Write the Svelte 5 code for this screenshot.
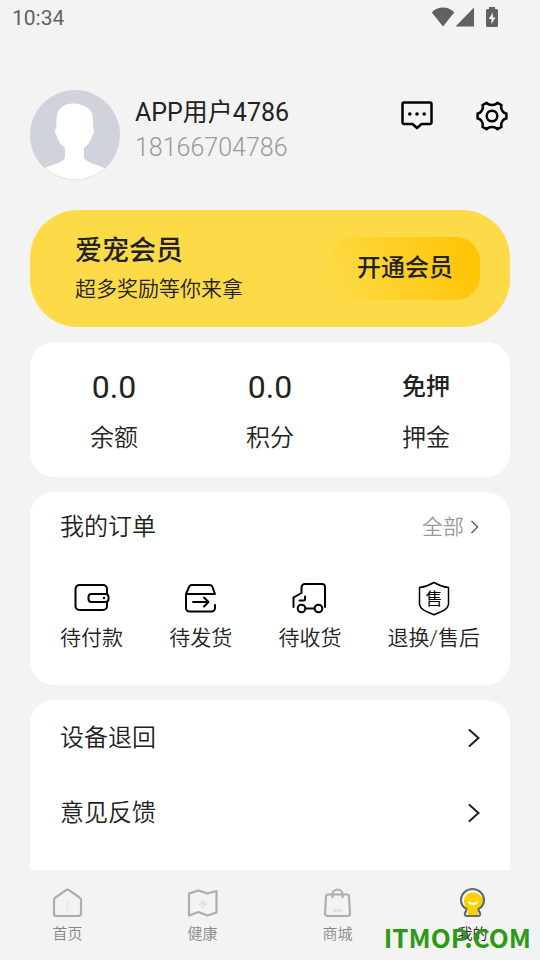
<script lang="ts">
  type Stat = { label: string; value: string; text?: boolean };

  const user = { name: 'APP用户4786', phone: '18166704786' };

  const stats: Stat[] = [
    { label: '余额', value: '0.0' },
    { label: '积分', value: '0.0' },
    { label: '押金', value: '免押', text: true },
  ];

  const orders = [
    { id: 'pay', label: '待付款' },
    { id: 'ship', label: '待发货' },
    { id: 'receive', label: '待收货' },
    { id: 'service', label: '退换/售后' },
  ];

  const menu = ['设备退回', '意见反馈'];

  const tabs = [
    { id: 'home', label: '首页' },
    { id: 'health', label: '健康' },
    { id: 'mall', label: '商城' },
    { id: 'mine', label: '我的' },
  ];

  let active = $state('mine');
</script>

<div class="app">
  <div class="status">
    <span>10:34</span>
    <div class="status-icons">
      <svg width="24" height="20" viewBox="0 0 24 20" fill="currentColor">
        <path d="M12 19.500L.8 5.500C3.800 2 7.500 .5 12 .5s8.200 1.500 11.200 5z" />
      </svg>
      <svg width="20" height="20" viewBox="0 0 20 20" fill="currentColor">
        <path d="M19 .5v19H.5z" />
      </svg>
      <svg class="battery" width="14" height="20" viewBox="0 0 14 20">
        <path d="M4 0h6v2h1.500a1.500 1.500 0 0 1 1.500 1.500v15a1.500 1.500 0 0 1-1.500 1.500h-9A1.500 1.500 0 0 1 1 18.500v-15A1.500 1.500 0 0 1 2.500 2H4z" fill="currentColor" />
        <path d="M7.800 5.500L3.800 12h2.700v5l4-6.500H7.800z" fill="#f3f3f3" />
      </svg>
    </div>
  </div>

  <main>
    <header class="profile">
      <svg class="avatar" width="90" height="90" viewBox="0 0 90 90">
        <defs>
          <clipPath id="avatar-clip"><circle cx="45" cy="45" r="44.500" /></clipPath>
        </defs>
        <circle cx="45" cy="45" r="45" fill="#d0d3db" />
        <path
          clip-path="url(#avatar-clip)"
          fill="#fff"
          d="M26.500 38V30C26.500 19 33 13.500 43 13.500c3-.3 6 0 8 1.500 8 2 12 7 12 15v8c1.500 1 1.500 5-.5 7-1.500 6-5 10-8.500 13v9.500c2 5 12 6.500 20 10.500L75 90H15V78c9-4 18-5.500 20-10.500V58c-4-3-7-7-8.500-13-2-2-2-6 0-7z"
        />
      </svg>
      <div class="who">
        <h1>{user.name}</h1>
        <p>{user.phone}</p>
      </div>
      <div class="actions">
        <button aria-label="消息">
          <svg width="34" height="34" viewBox="0 0 34 34" fill="none" stroke="currentColor" stroke-width="2.500" stroke-linejoin="round">
            <path d="M4 3.500h26A1.500 1.500 0 0 1 31.500 5v18.500A1.500 1.500 0 0 1 30 25h-8.500L17 29l-4.500-4H4a1.500 1.500 0 0 1-1.500-1.500V5A1.500 1.500 0 0 1 4 3.500z" />
            <g fill="currentColor" stroke="none">
              <circle cx="9.800" cy="15" r="1.800" />
              <circle cx="17" cy="15" r="1.800" />
              <circle cx="24.200" cy="15" r="1.800" />
            </g>
          </svg>
        </button>
        <button aria-label="设置">
          <svg width="34" height="34" viewBox="0 0 34 34" fill="none" stroke="currentColor" stroke-width="2.500" stroke-linejoin="round">
            <path d="M11.500 3.800C13.500 6.600 20.500 6.600 22.500 3.800L26.500 6.100C25.100 9.300 27.800 14.200 31.400 14.500V19.500C27.800 19.800 25.100 24.700 26.500 27.900L22.500 30.200C20.500 27.400 13.500 27.400 11.500 30.200L7.500 27.900C8.900 24.700 6.200 19.800 2.600 19.500V14.500C6.200 14.200 8.900 9.300 7.500 6.100Z" />
            <circle cx="17" cy="17" r="5.300" />
          </svg>
        </button>
      </div>
    </header>

    <section class="vip">
      <div>
        <h2>爱宠会员</h2>
        <p>超多奖励等你来拿</p>
      </div>
      <button>开通会员</button>
    </section>

    <section class="card stats">
      {#each stats as stat}
        <div class="stat">
          <strong class:text={stat.text}>{stat.value}</strong>
          <span>{stat.label}</span>
        </div>
      {/each}
    </section>

    <section class="card orders">
      <div class="orders-head">
        <h2>我的订单</h2>
        <a href="#orders">
          全部
          <svg width="10" height="14" viewBox="0 0 10 14" fill="none" stroke="#666" stroke-width="1.500">
            <path d="M1.500 1l6 6-6 6" />
          </svg>
        </a>
      </div>
      <div class="order-list">
        {#each orders as order}
          <button>
            <svg width="36" height="36" viewBox="0 0 36 36" fill="none" stroke="currentColor" stroke-width="2" stroke-linecap="round" stroke-linejoin="round">
              {#if order.id === 'pay'}
                <path d="M33 14V9a4 4 0 0 0-4-4H5.500a4 4 0 0 0-4 4v17a4 4 0 0 0 4 4H29a4 4 0 0 0 4-4V22" />
                <rect x="14.500" y="14" width="20" height="8" rx="3" />
                <circle cx="30" cy="18" r="1.200" fill="currentColor" stroke="none" />
              {:else if order.id === 'ship'}
                <path d="M32 25v3a3.500 3.500 0 0 1-3.500 3.500h-22A3.500 3.500 0 0 1 3 28V14h29L29.500 7a3 3 0 0 0-2.500-2H8.500A3 3 0 0 0 6 7L3 14" />
                <path d="M10 22h15M21 17.500l4.500 4.500-4.500 4.500" />
              {:else if order.id === 'receive'}
                <path d="M1.500 27V17.500L9.500 13V7.500A3.500 3.500 0 0 1 13 4h17A3 3 0 0 1 33 7v20M13.500 28.500h8.500M7.500 20.500H12a1 1 0 0 0 1-1V16.500" />
                <circle cx="9.500" cy="28.500" r="3.800" />
                <circle cx="26.500" cy="28.500" r="3.800" />
              {:else}
                <path stroke-width="1.500" d="M18 2.500c4.500 2.800 9 4.300 14.500 5v17C31.500 30 25 31.500 18 34.800 11 31.500 4.500 30 3.500 24.500v-17C9 6.800 13.500 5.300 18 2.500z" />
                <text x="18" y="25" text-anchor="middle">售</text>
              {/if}
            </svg>
            <span>{order.label}</span>
          </button>
        {/each}
      </div>
    </section>

    <nav class="card menu" aria-label="更多服务">
      {#each menu as item}
        <a href="#menu">
          {item}
          <svg width="14" height="20" viewBox="0 0 14 20" fill="none" stroke="#222" stroke-width="2" stroke-linecap="round">
            <path d="M2.500 2l9 8-9 8" />
          </svg>
        </a>
      {/each}
    </nav>
  </main>

  <nav class="tabs" aria-label="主导航">
    {#each tabs as tab}
      <button class:active={active === tab.id} onclick={() => (active = tab.id)}>
        <svg width="32" height="32" viewBox="0 0 32 32" fill="none" stroke="#aaaead" stroke-width="2.200" stroke-linejoin="round">
          {#if tab.id === 'home'}
            <path d="M3.500 10.500L14 3.200a2.500 2.500 0 0 1 3 0l10.500 7.300A3 3 0 0 1 29 13v13.500a2.500 2.500 0 0 1-2.500 2.500h-22A2.500 2.500 0 0 1 2 26.500V13a3 3 0 0 1 1.500-2.500z" />
            <path d="M15.500 15.500v7" stroke="#e5ecea" stroke-width="3" stroke-linecap="round" />
          {:else if tab.id === 'health'}
            <path d="M2 6.500L11.500 3.500l9 3L29.500 4v21.500L20.500 28.500l-9-3.500-9.500 3.500z" />
            <path d="M16 14v6M13 17h6" stroke="#dfe4e2" stroke-width="2.500" stroke-linecap="round" />
          {:else if tab.id === 'mall'}
            <path d="M6 7.500h19a2 2 0 0 1 2 2l1 17a2.500 2.500 0 0 1-2.500 2.500h-20A2.500 2.500 0 0 1 3 26.500l1-17a2 2 0 0 1 2-2zM10.500 11V7.500a5 5 0 0 1 10 0V11" />
            <path d="M11 23.500h9" stroke="#dfe3e1" stroke-width="2.500" />
          {:else}
            <path d="M9.500 22C6 20 4 17 4 13a11.500 11 0 0 1 23 0c0 4-2 7-5.500 9 0 2 .7 2.500 1.500 4 .6 1.500-.2 3-2 3H10c-1.800 0-2.600-1.500-2-3 .8-1.500 1.500-2 1.500-4z" fill="#fff" stroke="none" />
            <path d="M11 28v-5.500c-2.500-2-4-4.500-4-8.500 0-5.500 4.500-8.500 9-8.500S26 9 26 14c0 4-2 6.500-5 8.500V28z" fill="#fdd000" stroke="none" />
            <path d="M9.500 22C6 20 4 17 4 13a11.500 11 0 0 1 23 0c0 4-2 7-5.500 9 0 2 .7 2.500 1.500 4 .6 1.500-.2 3-2 3H10c-1.800 0-2.600-1.500-2-3 .8-1.500 1.500-2 1.500-4z" stroke="#666b69" />
            <path d="M12 15.500c2 1.800 6 1.800 8 0" stroke="#fff" stroke-width="2.200" stroke-linecap="round" />
          {/if}
        </svg>
        <span>{tab.label}</span>
      </button>
    {/each}
    <span class="site-mark">ITMOP.COM</span>
  </nav>
</div>

<style>
  :global(body) {
    margin: 0;
    background: #f3f3f3;
  }
  .app {
    display: flex;
    flex-direction: column;
    height: 100vh;
    font-family: Roboto, 'Noto Sans CJK SC', sans-serif;
    font-weight: 350;
    color: #222;
    background: #f3f3f3;
  }
  h1, h2, p {
    margin: 0;
    font-weight: inherit;
  }
  button {
    padding: 0;
    border: 0;
    background: none;
    font: inherit;
    color: inherit;
    cursor: pointer;
  }
  a {
    color: inherit;
    text-decoration: none;
  }
  svg {
    display: block;
    flex: none;
  }

  .status {
    display: flex;
    flex: none;
    align-items: center;
    justify-content: space-between;
    height: 36px;
    padding: 0 41px 0 12px;
    font-size: 21px;
    font-weight: 400;
    color: #616161;
  }
  .status-icons {
    display: flex;
    align-items: center;
    padding-bottom: 2px;
  }
  .battery { margin-left: 10px; }

  main {
    display: flex;
    flex: 1;
    flex-direction: column;
    gap: 15px;
    min-height: 0;
    padding: 54px 30px 0;
    overflow: hidden;
  }
  main > * { flex: none; }

  .profile {
    display: flex;
    align-items: flex-start;
    margin-bottom: 15px;
  }
  .who {
    flex: 1;
    padding: 5px 0 0 15px;
    font-size: 25px;
    line-height: 35px;
  }
  .who h1 {
    font-size: 25px;
    font-weight: 400;
  }
  .who p { color: #999; }
  .actions {
    display: flex;
    gap: 41px;
    padding: 9px 1px 0 0;
    color: #000;
  }

  .vip {
    display: flex;
    align-items: center;
    justify-content: space-between;
    box-sizing: border-box;
    min-height: 117px;
    padding: 0 30px 0 45px;
    border-radius: 48px;
    background: #fddb48;
  }
  .vip h2 {
    font-size: 27px;
    font-weight: 500;
    line-height: 40px;
  }
  .vip p {
    font-size: 21px;
    line-height: 36px;
  }
  .vip button {
    padding: 0 27px;
    border-radius: 24px;
    background: linear-gradient(70deg, #fddb48, #ffc300);
    font-size: 24px;
    font-weight: 500;
    line-height: 63px;
  }

  .card {
    border-radius: 24px;
    background: #fff;
  }

  .stats {
    display: flex;
    padding: 20px 6px 13px;
  }
  .stat {
    display: flex;
    flex: 1;
    flex-direction: column;
    align-items: center;
    font-size: 24px;
    line-height: 51px;
  }
  .stat strong {
    font-size: 32px;
    font-weight: 400;
  }
  .stat strong.text {
    font-size: 24px;
    font-weight: 500;
  }

  .orders { padding: 15px 30px 30px; }
  .orders-head {
    display: flex;
    align-items: center;
    justify-content: space-between;
    line-height: 40px;
  }
  .orders-head h2 { font-size: 24px; }
  .orders-head a {
    display: flex;
    align-items: center;
    gap: 6px;
    font-size: 21px;
    color: #999;
  }
  .order-list {
    display: flex;
    justify-content: space-between;
    padding-top: 33px;
  }
  .order-list button {
    display: flex;
    flex-direction: column;
    align-items: center;
    gap: 5px;
    font-size: 21px;
    line-height: 34px;
  }
  .order-list svg { color: #000; }
  .order-list text {
    font-size: 17px;
    font-weight: 400;
    fill: #000;
    stroke: none;
  }

  .menu {
    flex: 1 0 auto;
    border-radius: 24px 24px 0 0;
  }
  .menu a {
    display: flex;
    align-items: center;
    justify-content: space-between;
    height: 75px;
    padding: 0 29px 0 30px;
    font-size: 24px;
    line-height: 36px;
  }

  .tabs {
    position: relative;
    display: flex;
    flex: none;
    height: 90px;
  }
  .tabs button {
    display: flex;
    flex: 1;
    flex-direction: column;
    align-items: center;
    padding-top: 17px;
    font-size: 15px;
    line-height: 30px;
    color: #888;
  }
  .tabs button.active { color: #222; }
  .site-mark {
    position: absolute;
    right: 9px;
    bottom: 5px;
    font-family: 'Noto Sans CJK SC', sans-serif;
    font-size: 26px;
    font-weight: 700;
    line-height: 36px;
    color: #2b9a16;
    pointer-events: none;
  }
</style>
